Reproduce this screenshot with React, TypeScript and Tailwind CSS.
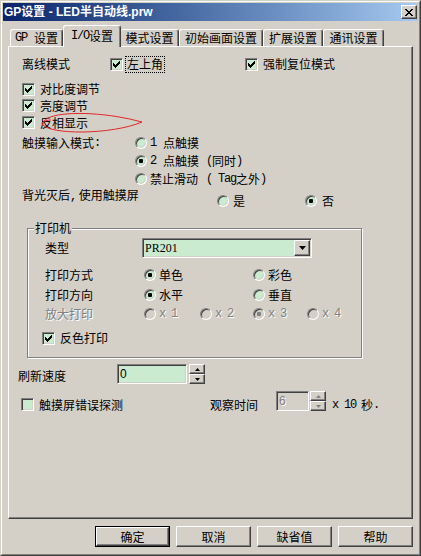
import React from "react";

const SUNKEN =
  "border border-t-[#808080] border-l-[#808080] border-b-white border-r-white shadow-[inset_1px_1px_0_#404040,inset_-1px_-1px_0_#d4d0c8]";
const RAISED =
  "border border-t-white border-l-white border-b-[#404040] border-r-[#404040] shadow-[inset_-1px_-1px_0_#808080]";
const LM = "[font-family:'Liberation_Mono',monospace] tracking-[-1.2px]";
const DIS = "text-[#808080] [text-shadow:1px_1px_0_#fff]";

function Check({ checked }: { checked?: boolean }) {
  return (
    <div className={`w-[13px] h-[13px] shrink-0 flex items-center justify-center bg-[#cbebd0] ${SUNKEN}`}>
      {checked && (
        <svg width="7" height="7" viewBox="0 0 7 7" shapeRendering="crispEdges">
          <path
            d="M6 0h1v1h-1z M5 1h2v1h-2z M0 2h1v1h-1z M4 2h3v1h-3z M0 3h2v1h-2z M3 3h3v1h-3z M0 4h5v1h-5z M1 5h3v1h-3z M2 6h1v1h-1z"
            fill="#000"
          />
        </svg>
      )}
    </div>
  );
}

function Radio({ checked, disabled }: { checked?: boolean; disabled?: boolean }) {
  return (
    <div
      className={`w-[12px] h-[12px] shrink-0 rounded-full flex items-center justify-center border border-t-[#808080] border-l-[#808080] border-b-white border-r-white shadow-[inset_1px_1px_0_#404040,inset_-1px_-1px_0_#d4d0c8] ${
        disabled ? "bg-[#d4d0c8]" : "bg-[#cbebd0]"
      }`}
    >
      {checked && <div className={`w-[4px] h-[4px] rounded-[1px] ${disabled ? "bg-[#808080]" : "bg-black"}`} />}
    </div>
  );
}

function RadioItem({
  checked,
  disabled,
  children,
  className = "",
}: {
  checked?: boolean;
  disabled?: boolean;
  children: React.ReactNode;
  className?: string;
}) {
  return (
    <div className={`flex items-center gap-[3px] ${className}`}>
      <Radio checked={checked} disabled={disabled} />
      <span className={`flex items-center ${disabled ? DIS : ""}`}>{children}</span>
    </div>
  );
}

function Spin({ disabled }: { disabled?: boolean }) {
  const c = disabled ? "#808080" : "#000";
  return (
    <div className="flex flex-col w-[16px] h-[20px] shrink-0">
      <div className={`h-[10px] flex items-center justify-center bg-[#d4d0c8] ${RAISED}`}>
        <svg width="5" height="3" viewBox="0 0 5 3">
          <polygon points="2.5,0 5,3 0,3" fill={c} />
        </svg>
      </div>
      <div className={`h-[10px] flex items-center justify-center bg-[#d4d0c8] ${RAISED}`}>
        <svg width="5" height="3" viewBox="0 0 5 3">
          <polygon points="0,0 5,0 2.5,3" fill={c} />
        </svg>
      </div>
    </div>
  );
}

function Btn({ children, def }: { children: React.ReactNode; def?: boolean }) {
  if (def) {
    return (
      <div className="w-[75px] h-[21px] border border-black">
        <div className={`w-full h-full flex items-center justify-center bg-[#d4d0c8] ${RAISED}`}>{children}</div>
      </div>
    );
  }
  return <div className={`w-[75px] h-[21px] flex items-center justify-center bg-[#d4d0c8] ${RAISED}`}>{children}</div>;
}

export default function App() {
  return (
    <div className="w-[421px] h-[556px] bg-[#d4d0c8] border border-t-[#d4d0c8] border-l-[#d4d0c8] border-r-[#404040] border-b-[#404040] [font-family:'Noto_Sans_CJK_SC',sans-serif] text-[12px] leading-[14px] text-black overflow-hidden">
      <div className="w-full h-full border border-t-white border-l-white border-r-[#808080] border-b-[#808080] p-[1px] flex flex-col">
        {/* Title bar */}
        <div className="h-[18px] shrink-0 flex items-center justify-between bg-linear-to-r from-[#0a246a] to-[#a6caf0] pl-[1px] pr-[1px]">
          <span className="[font-family:'Liberation_Sans','Noto_Sans_CJK_SC',sans-serif] font-bold text-white text-[12px] leading-[14px]">
            GP设置 - LED半自动线.prw
          </span>
          <div className={`w-[16px] h-[14px] flex items-center justify-center bg-[#d4d0c8] ${RAISED}`}>
            <svg width="8" height="7" viewBox="0 0 8 7" shapeRendering="crispEdges">
              <path
                d="M0 0h2v1h-2z M6 0h2v1h-2z M1 1h2v1h-2z M5 1h2v1h-2z M2 2h4v1h-4z M3 3h2v1h-2z M2 4h4v1h-4z M1 5h2v1h-2z M5 5h2v1h-2z M0 6h2v1h-2z M6 6h2v1h-2z"
                fill="#000"
              />
            </svg>
          </div>
        </div>

        {/* Tabs */}
        <div className="h-[25px] shrink-0 flex items-end pl-[7px]">
          <div className="w-[53px] h-[17px] flex items-center justify-center bg-[#d4d0c8] border-t border-l border-r border-t-white border-l-white border-r-[#404040] shadow-[inset_-1px_0_0_#808080] rounded-t-[3px]">
            <span className={LM}>GP</span>
            <span className="ml-[7px]">设置</span>
          </div>
          <div className="relative z-10 -mb-[1px] w-[58px] h-[22px] flex items-start pt-[3px] justify-center bg-[#d4d0c8] border-t border-l border-r border-t-white border-l-white border-r-[#404040] shadow-[inset_-1px_0_0_#808080] rounded-t-[3px]">
            <span className={LM}>I/O</span>
            <span>设置</span>
          </div>
          <div className="w-[58px] h-[17px] flex items-center justify-center bg-[#d4d0c8] border-t border-r border-t-white border-r-[#404040] shadow-[inset_-1px_0_0_#808080] rounded-t-[3px]">
            模式设置
          </div>
          <div className="w-[84px] h-[17px] flex items-center justify-center bg-[#d4d0c8] border-t border-l border-r border-t-white border-l-white border-r-[#404040] shadow-[inset_-1px_0_0_#808080] rounded-t-[3px]">
            初始画面设置
          </div>
          <div className="w-[60px] h-[17px] flex items-center justify-center bg-[#d4d0c8] border-t border-l border-r border-t-white border-l-white border-r-[#404040] shadow-[inset_-1px_0_0_#808080] rounded-t-[3px]">
            扩展设置
          </div>
          <div className="w-[61px] h-[17px] flex items-center justify-center bg-[#d4d0c8] border-t border-l border-r border-t-white border-l-white border-r-[#404040] shadow-[inset_-1px_0_0_#808080] rounded-t-[3px]">
            通讯设置
          </div>
        </div>

        {/* Panel */}
        <div className="relative ml-[5px] w-[405px] h-[473px] shrink-0 flex flex-col border border-t-white border-l-white border-r-[#404040] border-b-[#404040] shadow-[inset_-1px_-1px_0_#808080]">
          {/* Row: 离线模式 */}
          <div className="mt-[8px] h-[18px] flex items-center">
            <span className="ml-[13px] w-[88px]">离线模式</span>
            <div className="w-[135px] flex items-center">
              <Check checked />
              <div className="ml-[2px] h-[17px] flex items-center px-[1px] border border-dotted border-black">
                左上角
              </div>
            </div>
            <Check checked />
            <span className="ml-[5px]">强制复位模式</span>
          </div>

          <div className="mt-[8px] h-[16px] flex items-center pl-[13px]">
            <Check checked />
            <span className="ml-[5px]">对比度调节</span>
          </div>
          <div className="h-[17px] flex items-center pl-[13px]">
            <Check checked />
            <span className="ml-[5px]">亮度调节</span>
          </div>
          <div className="h-[17px] flex items-center pl-[13px]">
            <Check checked />
            <span className="ml-[5px]">反相显示</span>
          </div>

          {/* Touch input mode */}
          <div className="mt-[3px] flex">
            <div className="ml-[13px] w-[113px] h-[18px] flex items-center">
              触摸输入模式<span className={LM}>:</span>
            </div>
            <div className="flex flex-col">
              <RadioItem className="h-[18px]">
                <span className={LM}>1</span>
                <span className="ml-[7px]">点触摸</span>
              </RadioItem>
              <RadioItem className="h-[18px]" checked>
                <span className={LM}>2</span>
                <span className="ml-[7px]">点触摸</span>
                <span className={`${LM} ml-[7px]`}>(</span>
                <span>同时</span>
                <span className={LM}>)</span>
              </RadioItem>
              <RadioItem className="h-[18px]">
                <span>禁止滑动</span>
                <span className={`${LM} ml-[8px]`}>(</span>
                <span className={`${LM} ml-[6px]`}>Tag</span>
                <span>之外</span>
                <span className={LM}>)</span>
              </RadioItem>
            </div>
          </div>

          {/* Backlight */}
          <div className="h-[18px] flex items-start">
            <span className="ml-[13px] w-[195px] h-[14px]">
              背光灭后<span className={LM}>,</span> 使用触摸屏
            </span>
            <RadioItem className="mt-[6px] h-[14px] w-[88px] gap-[4px]">是</RadioItem>
            <RadioItem className="mt-[6px] h-[14px] gap-[5px]" checked>
              否
            </RadioItem>
          </div>

          {/* Printer group */}
          <div className="relative mt-[22px] ml-[18px] w-[335px] h-[130px] shrink-0 flex flex-col border border-[#808080] shadow-[inset_1px_1px_0_#fff,1px_1px_0_#fff]">
            <span className="absolute -top-[8px] left-[6px] px-[1px] bg-[#d4d0c8]">打印机</span>
            <div className="mt-[9px] h-[20px] flex items-center">
              <span className="ml-[17px] w-[97px]">类型</span>
              <div className={`w-[170px] h-[20px] flex items-center bg-[#cbebd0] ${SUNKEN} pl-[2px] pr-[1px]`}>
                <span className="flex-1 [font-family:'Liberation_Serif',serif] text-[12px]">PR201</span>
                <div className={`w-[16px] h-[16px] flex items-center justify-center bg-[#d4d0c8] ${RAISED}`}>
                  <svg width="7" height="4" viewBox="0 0 7 4">
                    <polygon points="0,0 7,0 3.5,4" fill="#000" />
                  </svg>
                </div>
              </div>
            </div>
            <div className="mt-[8px] h-[18px] flex items-center">
              <span className="ml-[17px] w-[99px]">打印方式</span>
              <RadioItem className="w-[109px]" checked>
                单色
              </RadioItem>
              <RadioItem>彩色</RadioItem>
            </div>
            <div className="mt-[2px] h-[18px] flex items-center">
              <span className="ml-[17px] w-[99px]">打印方向</span>
              <RadioItem className="w-[109px]" checked>
                水平
              </RadioItem>
              <RadioItem>垂直</RadioItem>
            </div>
            <div className="mt-[1px] h-[18px] flex items-center">
              <span className={`ml-[17px] w-[99px] ${DIS}`}>放大打印</span>
              <RadioItem className="w-[56px]" disabled>
                <span className={LM}>x 1</span>
              </RadioItem>
              <RadioItem className="w-[53px]" disabled>
                <span className={LM}>x 2</span>
              </RadioItem>
              <RadioItem className="w-[54px]" disabled checked>
                <span className={LM}>x 3</span>
              </RadioItem>
              <RadioItem disabled>
                <span className={LM}>x 4</span>
              </RadioItem>
            </div>
            <div className="mt-[6px] h-[18px] flex items-center pl-[14px]">
              <Check checked />
              <span className="ml-[5px]">反色打印</span>
            </div>
          </div>

          {/* Refresh speed */}
          <div className="mt-[6px] h-[20px] flex items-start">
            <span className="ml-[9px] w-[99px] mt-[5px]">刷新速度</span>
            <div className={`w-[70px] h-[20px] flex items-center bg-[#cbebd0] ${SUNKEN} pl-[2px]`}>
              <span className="[font-family:'Liberation_Sans',sans-serif] text-[12px]">0</span>
            </div>
            <div className="ml-[2px]">
              <Spin />
            </div>
          </div>

          {/* Touch error detection */}
          <div className="mt-[7px] h-[21px] flex items-start">
            <div className="ml-[12px] w-[189px] mt-[7px] h-[13px] flex items-center">
              <Check />
              <span className="ml-[5px]">触摸屏错误探测</span>
            </div>
            <span className="w-[66px] mt-[7px]">观察时间</span>
            <div className={`w-[33px] h-[20px] flex items-center bg-[#d4d0c8] ${SUNKEN} pl-[2px]`}>
              <span className={`[font-family:'Liberation_Sans',sans-serif] text-[12px] ${DIS}`}>6</span>
            </div>
            <div className="ml-[1px]">
              <Spin disabled />
            </div>
            <span className="ml-[6px] mt-[7px] flex items-center">
              <span className={LM}>x</span>
              <span className={`${LM} ml-[6px]`}>10</span>
              <span className="ml-[5px]">秒</span>
              <span className={LM}>.</span>
            </span>
          </div>

          {/* Red annotation ellipse */}
          <svg className="absolute left-[30px] top-[65px]" width="106" height="24" viewBox="0 0 106 24">
            <path
              d="M4 14 C 0 -2, 60 -2, 103 10 C 72 23, 10 23, 3 12 C 4 9, 9 8, 12 8"
              fill="none"
              stroke="#e02828"
              strokeWidth="1"
            />
          </svg>
        </div>

        {/* Buttons */}
        <div className="mt-[7px] flex justify-end gap-[6px] pr-[5px]">
          <Btn def>确定</Btn>
          <Btn>取消</Btn>
          <Btn>缺省值</Btn>
          <Btn>帮助</Btn>
        </div>
      </div>
    </div>
  );
}
